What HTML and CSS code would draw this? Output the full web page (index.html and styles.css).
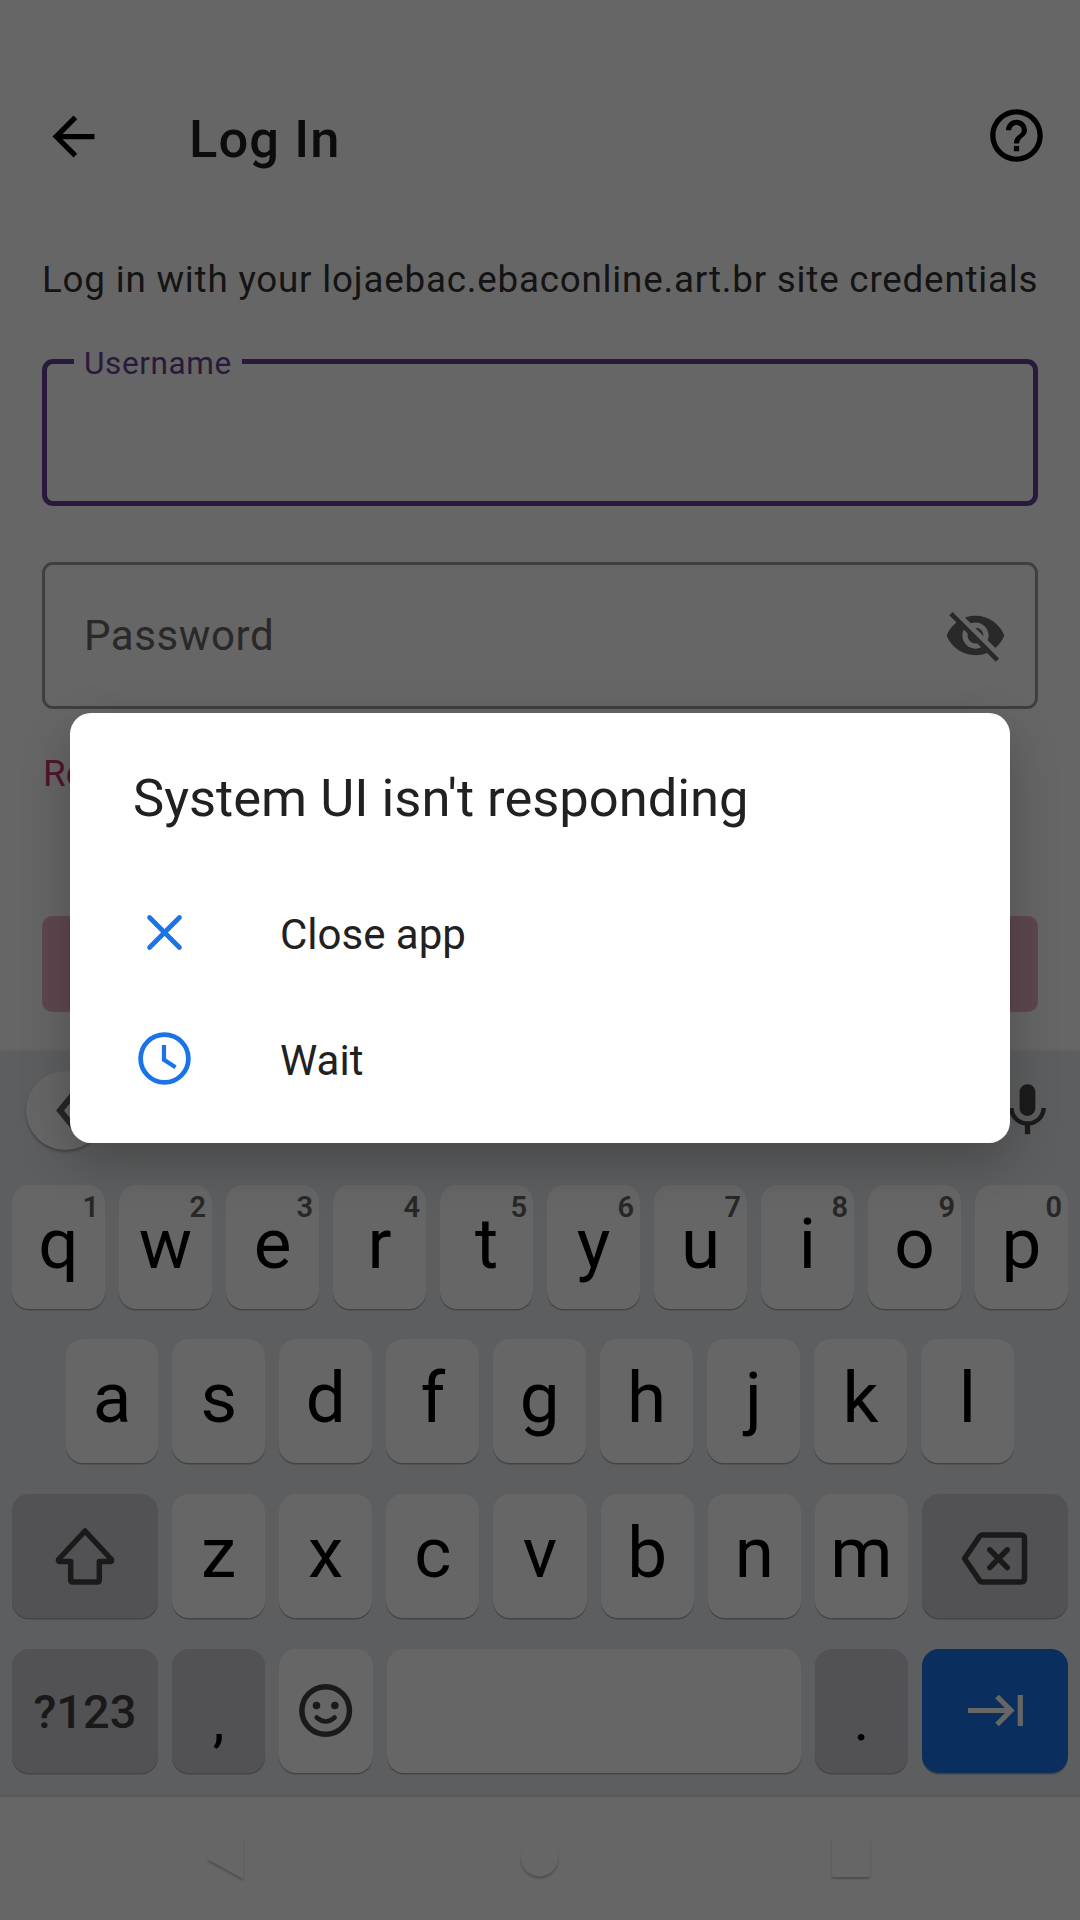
FILE: index.html
```html
<!DOCTYPE html>
<html lang="en">
<head>
<meta charset="utf-8">
<title>Log In</title>
<link rel="stylesheet" href="styles.css">
</head>
<body>
<div class="screen">
  <main class="app">
    <header class="toolbar">
      <svg class="icon" viewBox="0 0 24 24"><path d="M20 11H7.83l5.59-5.59L12 4l-8 8 8 8 1.41-1.41L7.83 13H20v-2z"/></svg>
      <h1 class="toolbar-title">Log In</h1>
      <svg class="icon help" viewBox="0 0 24 24"><path d="M11 18h2v-2h-2v2zm1-16C6.48 2 2 6.48 2 12s4.48 10 10 10 10-4.48 10-10S17.52 2 12 2zm0 18c-4.41 0-8-3.59-8-8s3.59-8 8-8 8 3.59 8 8-3.59 8-8 8zm0-14c-2.21 0-4 1.79-4 4h2c0-1.1.9-2 2-2s2 .9 2 2c0 2-3 1.75-3 5h2c0-2.25 3-2.5 3-5 0-2.21-1.79-4-4-4z"/></svg>
    </header>
    <p class="intro">Log in with your lojaebac.ebaconline.art.br site credentials</p>
    <div class="field field-focused"><span class="field-label">Username</span></div>
    <div class="field">
      <span class="field-hint">Password</span>
      <svg class="icon eye" viewBox="0 0 24 24"><path d="M12 7c2.76 0 5 2.24 5 5 0 .65-.13 1.26-.36 1.83l2.92 2.92c1.51-1.26 2.7-2.89 3.43-4.75-1.73-4.39-6-7.5-11-7.5-1.4 0-2.74.25-3.98.7l2.16 2.16C10.74 7.13 11.35 7 12 7zM2 4.27l2.28 2.28.46.46C3.08 8.3 1.78 10.02 1 12c1.73 4.39 6 7.5 11 7.5 1.55 0 3.03-.3 4.38-.84l.42.42L19.73 22 21 20.73 3.27 3 2 4.27zM7.53 9.8l1.55 1.55c-.05.21-.08.43-.08.65 0 1.66 1.34 3 3 3 .22 0 .44-.03.65-.08l1.55 1.55c-.67.33-1.41.53-2.2.53-2.76 0-5-2.24-5-5 0-.79.2-1.53.53-2.2zm4.31-.78l3.15 3.15.02-.16c0-1.66-1.34-3-3-3l-.17.01z"/></svg>
    </div>
    <a class="reset">Reset</a>
    <div class="submit"></div>
  </main>

  <section class="keyboard">
    <div class="suggestions">
      <span class="collapse"><svg viewBox="0 0 79 79"><path d="M50 20 34 39.5 50 59"/></svg></span>
      <svg class="icon mic" viewBox="0 0 24 24"><path d="M12 14c1.66 0 2.99-1.34 2.99-3L15 5c0-1.66-1.34-3-3-3S9 3.34 9 5v6c0 1.66 1.34 3 3 3zm5.3-3c0 3-2.54 5.1-5.3 5.1S6.7 14 6.7 11H5c0 3.41 2.72 6.23 6 6.72V21h2v-3.28c3.28-.48 6-3.3 6-6.72h-1.7z"/></svg>
    </div>
    <div class="keys">
      <div class="row">
        <div class="key">q<span class="alt">1</span></div>
        <div class="key">w<span class="alt">2</span></div>
        <div class="key">e<span class="alt">3</span></div>
        <div class="key">r<span class="alt">4</span></div>
        <div class="key">t<span class="alt">5</span></div>
        <div class="key">y<span class="alt">6</span></div>
        <div class="key">u<span class="alt">7</span></div>
        <div class="key">i<span class="alt">8</span></div>
        <div class="key">o<span class="alt">9</span></div>
        <div class="key">p<span class="alt">0</span></div>
      </div>
      <div class="row row-middle">
        <div class="key">a</div>
        <div class="key">s</div>
        <div class="key">d</div>
        <div class="key">f</div>
        <div class="key">g</div>
        <div class="key">h</div>
        <div class="key">j</div>
        <div class="key">k</div>
        <div class="key">l</div>
      </div>
      <div class="row">
        <div class="key wide muted"><svg class="glyph" viewBox="0 0 146 124"><path d="M73 37 46.5 65.5Q46 67.5 48 67.500H58.700V86Q58.700 88 60.700 88H85.300Q87.300 88 87.300 86V67.500H98Q100 67.500 99.500 65.500Z"/></svg></div>
        <div class="key">z</div>
        <div class="key">x</div>
        <div class="key">c</div>
        <div class="key">v</div>
        <div class="key">b</div>
        <div class="key">n</div>
        <div class="key">m</div>
        <div class="key wide muted"><svg class="glyph" viewBox="0 0 146 124"><path d="M60 41H99Q102.500 41 102.500 44.500V84.500Q102.500 88 99 88H60Q58.500 88 57.500 86.500L42.500 64.500 57.500 42.500Q58.500 41 60 41ZM67.800 55.800 85.300 73.600M85.300 55.800 67.800 73.600"/></svg></div>
      </div>
      <div class="row">
        <div class="key wide muted symbols">?123</div>
        <div class="key muted punct">,</div>
        <div class="key"><svg class="glyph" viewBox="0 0 93 124"><circle cx="46.500" cy="61.500" r="23.800"/><path d="M37.500 68.500Q46.500 76.500 55.500 68.500" stroke-width="4.500"/><circle class="dot" cx="37.300" cy="56.500" r="3.800"/><circle class="dot" cx="55.700" cy="56.500" r="3.800"/></svg></div>
        <div class="key space"></div>
        <div class="key muted punct">.</div>
        <div class="key wide enter"><svg class="glyph next" viewBox="0 0 146 124"><path d="M46 61.500H89M75 47.500 89 61.500 75 75.500M98.300 46V77"/></svg></div>
      </div>
    </div>
  </section>

  <nav class="navbar">
    <svg viewBox="0 0 42 42"><path d="M3 21 37.500 1.500Q39 1 39 3V39Q39 41 37.500 40Z"/></svg>
    <svg viewBox="0 0 42 42"><circle cx="22.500" cy="20" r="18.500"/></svg>
    <svg viewBox="0 0 42 42"><rect x="2" y="1" width="38" height="38" rx="2"/></svg>
  </nav>

  <div class="scrim">
    <div class="dialog">
      <h2 class="dialog-title">System UI isn't responding</h2>
      <div class="option">
        <svg class="icon" viewBox="0 0 24 24"><path d="M6.300 6.300 17.700 17.700M17.700 6.300 6.300 17.700" stroke-linecap="round"/></svg>
        <span>Close app</span>
      </div>
      <div class="option">
        <svg class="icon" viewBox="0 0 24 24"><circle cx="12" cy="12" r="9.100"/><path d="M11.800 6.900V12.500L16.200 15.300" stroke-width="1.600"/></svg>
        <span>Wait</span>
      </div>
    </div>
  </div>
</div>
</body>
</html>
```
FILE: styles.css
```css
* { box-sizing: border-box; }

body {
  margin: 0;
  font-family: Roboto, "Liberation Sans", sans-serif;
}

.screen {
  position: relative;
  display: flex;
  flex-direction: column;
  width: 1080px;
  height: 1920px;
  overflow: hidden;
  background: #fff;
}

.icon {
  display: block;
  flex: none;
  width: 63px;
  height: 63px;
}

.app {
  display: flex;
  flex-direction: column;
  height: 1052px;
  padding: 63px 42px 0;
}

.toolbar {
  display: flex;
  align-items: center;
  height: 147px;
  margin-right: -10px;
}

.toolbar-title {
  flex: 1;
  margin: 4px 0 0 84px;
  font-size: 52.5px;
  line-height: 62px;
  font-weight: 500;
  letter-spacing: 1.1px;
  color: #202020;
}

.help { margin-bottom: 2px; }

.intro {
  height: 43px;
  margin: 48px 0 58px;
  font-size: 36.75px;
  line-height: 43px;
  letter-spacing: 0.8px;
  white-space: nowrap;
  color: #333;
}

.field {
  position: relative;
  display: flex;
  align-items: center;
  justify-content: space-between;
  flex: none;
  height: 147px;
  margin-bottom: 56px;
  padding: 0 28px 0 39px;
  border: 3px solid #9f9f9f;
  border-radius: 11px;
}

.field-focused { border: 5px solid #674399; }

.field-label {
  position: absolute;
  top: -19px;
  left: 27px;
  padding: 0 10px;
  background: #fff;
  font-size: 31.5px;
  line-height: 37px;
  letter-spacing: 0.6px;
  color: #674399;
}

.field-hint {
  font-size: 42px;
  line-height: 50px;
  letter-spacing: 0.6px;
  color: #666;
}

.eye { fill: #666; }

.reset {
  height: 43px;
  margin: -13px 0 0 1px;
  font-size: 36.75px;
  line-height: 43px;
  color: #c9356e;
}

.submit {
  height: 96px;
  margin-top: 121px;
  border-radius: 10px;
  background: #eab2c5;
}

.keyboard {
  display: flex;
  flex-direction: column;
  height: 745px;
  border-bottom: 3px solid #e0e1e2;
  background: #e8eaed;
  box-shadow: 0 -1px 4px rgba(0, 0, 0, 0.12);
}

.suggestions {
  display: flex;
  align-items: center;
  justify-content: space-between;
  height: 133px;
  padding: 0 21px 16px 26px;
}

.collapse {
  width: 79px;
  height: 79px;
  border-radius: 50%;
  background: #fff;
  box-shadow: 0 2px 3px rgba(0, 0, 0, 0.3);
}

.collapse path {
  fill: none;
  stroke: #606060;
  stroke-width: 6;
}

.mic { fill: #444; }

.keys {
  display: flex;
  flex-direction: column;
  gap: 31px;
  padding: 0 12px;
}

.row {
  display: flex;
  gap: 14px;
  height: 124px;
}

.row-middle {
  margin-top: -1px;
  padding: 0 54px 0 53.5px;
}

.key {
  position: relative;
  flex: 1;
  border-radius: 17px;
  background: #fff;
  box-shadow: 0 1.5px 0 #a9abad;
  font-size: 71px;
  line-height: 117px;
  text-align: center;
  color: #000;
}

.alt {
  position: absolute;
  top: 5px;
  right: 6px;
  font-size: 29px;
  line-height: 34px;
  font-weight: 600;
  color: #646464;
}

.wide { flex: 0 0 146px; }

.space { flex: 0 0 414px; }

.muted { background: #cdcdd2; }

.symbols {
  font-size: 47px;
  line-height: 125px;
  font-weight: 500;
  color: #404040;
}

.punct {
  font-size: 60px;
  line-height: 142px;
}

.enter { background: #1a73e8; }

.glyph {
  display: block;
  width: 100%;
  height: 124px;
  fill: none;
  stroke: #424242;
  stroke-width: 5.5;
  stroke-linecap: round;
  stroke-linejoin: round;
}

.glyph .dot {
  fill: #424242;
  stroke: none;
}

.next {
  stroke: #fff;
  stroke-width: 5.2;
  stroke-linecap: butt;
  stroke-linejoin: miter;
}

.navbar {
  display: flex;
  justify-content: space-between;
  height: 123px;
  padding: 41px 208px 0 204px;
}

.navbar svg {
  width: 42px;
  height: 42px;
  overflow: visible;
  fill: #fff;
  filter: drop-shadow(0 2px 1px rgba(0, 0, 0, 0.25));
}

.scrim {
  position: absolute;
  inset: 0;
  display: flex;
  align-items: center;
  justify-content: center;
  padding-bottom: 64px;
  background: rgba(0, 0, 0, 0.6);
}

.dialog {
  width: 940px;
  height: 430px;
  padding: 54px 63px 0;
  border-radius: 21px;
  background: #fff;
  box-shadow: 0 18px 50px rgba(0, 0, 0, 0.24);
  color: #212121;
}

.dialog-title {
  margin: 0 0 40px;
  font-size: 52.5px;
  line-height: 62px;
  font-weight: 400;
}

.option {
  display: flex;
  align-items: center;
  gap: 84px;
  height: 126px;
  font-size: 42px;
  line-height: 50px;
}

.option span { margin-top: 5px; }

.option .icon {
  fill: none;
  stroke: #1a73e8;
  stroke-width: 1.8;
}
```
